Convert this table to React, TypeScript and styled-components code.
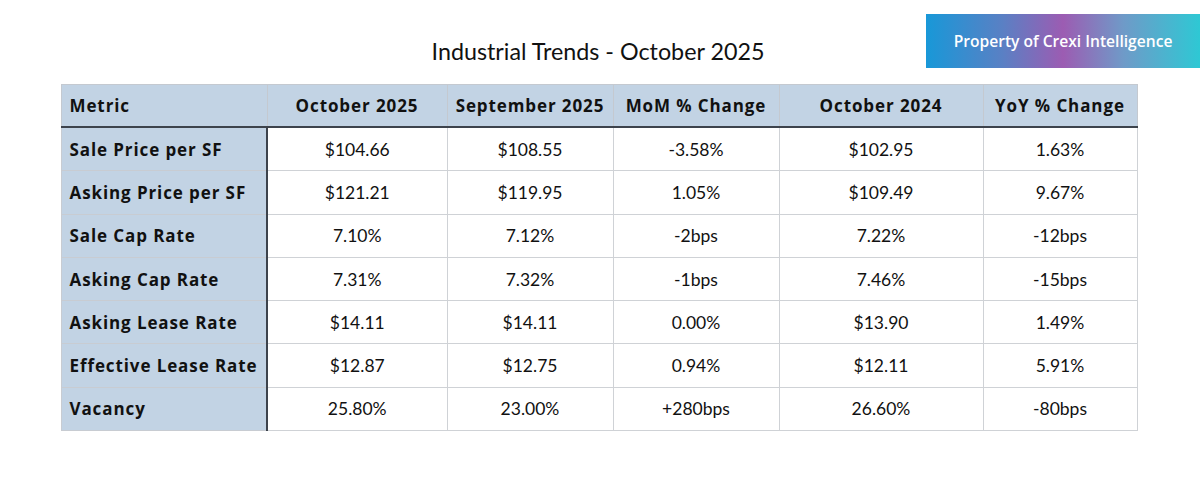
import styled, { createGlobalStyle } from "styled-components";

const GlobalStyle = createGlobalStyle`
  body {
    margin: 0;
    background: #ffffff;
    font-family: "Lato", "Noto Sans", sans-serif;
    color: #111111;
  }
`;

const columns = [206, 180, 166, 166, 204, 154];

const headers = [
  "Metric",
  "October 2025",
  "September 2025",
  "MoM % Change",
  "October 2024",
  "YoY % Change",
];

const rows = [
  ["Sale Price per SF", "$104.66", "$108.55", "-3.58%", "$102.95", "1.63%"],
  ["Asking Price per SF", "$121.21", "$119.95", "1.05%", "$109.49", "9.67%"],
  ["Sale Cap Rate", "7.10%", "7.12%", "-2bps", "7.22%", "-12bps"],
  ["Asking Cap Rate", "7.31%", "7.32%", "-1bps", "7.46%", "-15bps"],
  ["Asking Lease Rate", "$14.11", "$14.11", "0.00%", "$13.90", "1.49%"],
  ["Effective Lease Rate", "$12.87", "$12.75", "0.94%", "$12.11", "5.91%"],
  ["Vacancy", "25.80%", "23.00%", "+280bps", "26.60%", "-80bps"],
];

export default function App() {
  return (
    <>
      <GlobalStyle />
      <StyledPage>
        <StyledBadge>Property of Crexi Intelligence</StyledBadge>
        <StyledTitle>Industrial Trends - October 2025</StyledTitle>
        <StyledTable>
          <colgroup>
            {columns.map((w, i) => (
              <col key={i} style={{ width: w }} />
            ))}
          </colgroup>
          <thead>
            <tr>
              {headers.map((h, i) => (
                <StyledHead key={h} $first={i === 0}>
                  {h}
                </StyledHead>
              ))}
            </tr>
          </thead>
          <tbody>
            {rows.map((row) => (
              <tr key={row[0]}>
                <StyledMetric>{row[0]}</StyledMetric>
                {row.slice(1).map((v, i) => (
                  <StyledCell key={i}>{v}</StyledCell>
                ))}
              </tr>
            ))}
          </tbody>
        </StyledTable>
      </StyledPage>
    </>
  );
}

const StyledPage = styled.div`
  position: relative;
  width: 1200px;
  height: 492px;
  padding-top: 35px;
  box-sizing: border-box;
  display: flex;
  flex-direction: column;
  align-items: center;
`;

const StyledBadge = styled.div`
  position: absolute;
  top: 14px;
  left: 926px;
  width: 274px;
  height: 54px;
  display: flex;
  align-items: center;
  justify-content: center;
  color: #ffffff;
  font-family: "Open Sans", "Lato", sans-serif;
  font-size: 15.6px;
  font-weight: 600;
  background: linear-gradient(
    90deg,
    #1898d8 0%,
    #5a80c4 28%,
    #9c5cb2 50%,
    #6f9ac8 72%,
    #2ec8d4 100%
  );
`;

const StyledTitle = styled.h1`
  margin: 0 0 17px -4px;
  height: 32px;
  line-height: 32px;
  font-size: 23.3px;
  font-weight: 400;
  color: #111111;
`;

const StyledTable = styled.table`
  width: 1076px;
  border-collapse: collapse;
  table-layout: fixed;
  margin-left: -2px;
  font-size: 17.5px;
`;

const StyledHead = styled.th<{ $first?: boolean }>`
  height: 41px;
  padding: 0 8px;
  background: #c2d3e4;
  border: 1px solid #c4c9d0;
  border-bottom: 2px solid #3d434c;
  font-family: "Open Sans", "Lato", sans-serif;
  font-size: 17px;
  font-weight: 700;
  letter-spacing: 0.9px;
  text-align: ${(p) => (p.$first ? "left" : "center")};
  white-space: nowrap;
  color: #111111;
`;

const StyledMetric = styled.td`
  height: 42.3px;
  padding: 0 8px;
  background: #c2d3e4;
  border: 1px solid #c8ccd2;
  border-right: 2px solid #3d434c;
  font-family: "Open Sans", "Lato", sans-serif;
  font-size: 17px;
  font-weight: 700;
  letter-spacing: 0.9px;
  white-space: nowrap;
`;

const StyledCell = styled.td`
  height: 42.3px;
  padding: 0 8px;
  border: 1px solid #cfd2d6;
  text-align: center;
  font-weight: 400;
`;
